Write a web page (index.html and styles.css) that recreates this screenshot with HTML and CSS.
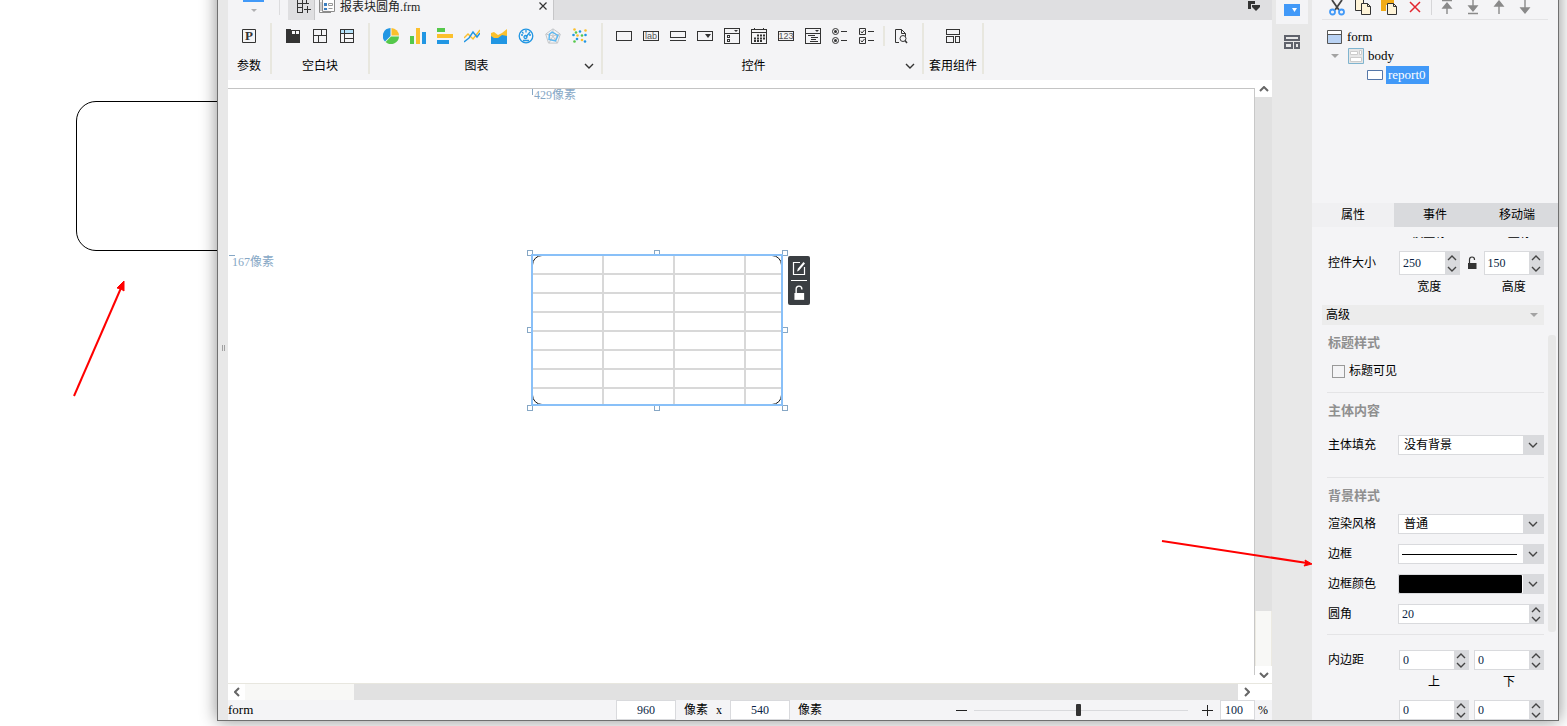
FILE: index.html
```html
<!DOCTYPE html>
<html lang="zh-CN">
<head>
    <meta charset="utf-8">
    <title>报表块圆角.frm</title>
    <link rel="stylesheet" href="styles.css">
</head>
<body>
    <svg class="defs" width="0" height="0" aria-hidden="true">
        <symbol id="chev-down" viewBox="0 0 10 6"><path d="M1 1l4 4 4-4" fill="none" stroke="currentColor" stroke-width="1.4"/></symbol>
        <symbol id="chev-up" viewBox="0 0 10 6"><path d="M1 5l4-4 4 4" fill="none" stroke="currentColor" stroke-width="1.4"/></symbol>
        <symbol id="lock" viewBox="0 0 12 14"><path d="M3.5 7V3.5a2.5 2.5 0 0 1 5 0V4" fill="none" stroke="currentColor" stroke-width="1.2"/><path d="M2 7h8.500v6H2z" fill="currentColor"/></symbol>
    </svg>

    <!-- 预览效果 -->
    <div class="preview"></div>

    <div class="window">
        <div class="grip"><i></i><i></i></div>

        <div class="main">
            <div class="tabbar">
                <div class="quick">
                    <svg width="22" height="14" viewBox="0 0 22 14"><path d="M0 0h21v2H0z" fill="#4199f8"/><path d="M8 9h6l-3 3z" fill="#b0b0b2"/></svg>
                </div>
                <button class="newtab" aria-label="新建">
                    <svg width="16" height="16" viewBox="0 0 16 16"><path d="M2.500 0v13M7.500 0v13M11.500 0v3M2 3.500h12M2 7.500h6M2 12.500h6M12.500 6v7M9 9.500h7" fill="none" stroke="#333" shape-rendering="crispEdges"/></svg>
                </button>
                <div class="tab">
                    <svg width="16" height="16" viewBox="0 0 16 16"><path d="M.5 0v12.500H12M3.500-2h12v13.500h-12z" fill="#fff" stroke="#8c8c8c"/><path d="M1 2h2v9H1z" fill="#ccc"/><path d="M5 3h3v3H5zM5 8h3v2H5z" fill="#3c7fc0"/><path d="M9.500 3.500h4v2h-4zM9.500 8.500h4" fill="none" stroke="#999"/></svg>
                    <span>报表块圆角.frm</span>
                    <button class="close" aria-label="关闭"><svg width="10" height="10" viewBox="0 0 10 10"><path d="M1.500 1.500l7 7M8.500 1.500l-7 7" stroke="#333" stroke-width="1.2"/></svg></button>
                </div>
                <button class="tablist" aria-label="全部标签"><svg width="14" height="12" viewBox="0 0 14 12"><path d="M1 1h7v3H4v5H1zM5 5h8v2l-4 4-4-4z" fill="#333"/></svg></button>
            </div>

            <div class="ribbon">
                <div class="group param">
                    <div class="icons">
                        <button aria-label="参数"><svg width="16" height="16" viewBox="0 0 16 16"><path d="M1.500 1.500h13v13h-13z" fill="none" stroke="#333"/><text x="8" y="12" class="p-mark">P</text></svg></button>
                    </div>
                    <div class="caption"><span>参数</span></div>
                </div>
                <div class="group blank">
                    <div class="icons">
                        <button aria-label="tab块"><svg width="16" height="16" viewBox="0 0 16 16"><path d="M1 1h5v1h9v13H1z" fill="#333"/><path d="M7 3h3v3H7zM11 3h3v3h-3z" fill="#f4f4f6"/></svg></button>
                        <button aria-label="绝对画布块"><svg width="16" height="16" viewBox="0 0 16 16"><path d="M1.500 1.500h13v13h-13zM1.500 7.500h13M9.500 1.500v6M6.500 7.500v7" fill="none" stroke="#333" shape-rendering="crispEdges"/></svg></button>
                        <button aria-label="报表块"><svg width="16" height="16" viewBox="0 0 16 16"><path d="M2 2h12v4H2z" fill="#b5e2fa"/><path d="M1.500 1.500h13v13h-13zM1.500 5.500h13M5.500 1.500v13M5.500 10.500h9" fill="none" stroke="#333" shape-rendering="crispEdges"/></svg></button>
                    </div>
                    <div class="caption"><span>空白块</span></div>
                </div>
                <div class="group charts">
                    <div class="icons">
                        <button aria-label="饼图"><svg width="16" height="16" viewBox="0 0 16 16"><path d="M7.500 8V0A8 8 0 0 0 2 13.500z" fill="#2196e3"/><path d="M8.500 0v7.500H16A8 8 0 0 0 8.500 0z" fill="#fbc02d"/><path d="M8 8.500h8A8 8 0 0 1 2.600 14z" fill="#55c84b"/></svg></button>
                        <button aria-label="柱形图"><svg width="16" height="16" viewBox="0 0 16 16"><path d="M0 8h4v8H0z" fill="#55c84b"/><path d="M6 0h4v16H6z" fill="#fbc02d"/><path d="M12 4h4v12h-4z" fill="#2196e3"/></svg></button>
                        <button aria-label="条形图"><svg width="16" height="16" viewBox="0 0 16 16"><path d="M0 0h8v4H0z" fill="#55c84b"/><path d="M0 6h16v4H0z" fill="#fbc02d"/><path d="M0 12h12v4H0z" fill="#2196e3"/></svg></button>
                        <button aria-label="折线图"><svg width="16" height="16" viewBox="0 0 16 16"><path d="M0 10l4-4 5 5 7-9" fill="none" stroke="#fbc02d" stroke-width="1.400"/><path d="M0 14l5-4 4-6 4 5 3-4" fill="none" stroke="#2196e3" stroke-width="1.400"/></svg></button>
                        <button aria-label="面积图"><svg width="16" height="16" viewBox="0 0 16 16"><path d="M0 5l3-1 4 3 4-2 5-4v9H0z" fill="#fbc02d"/><path d="M0 8l3 2h4l4-3 5 1v8H0z" fill="#2196e3"/></svg></button>
                        <button aria-label="仪表盘"><svg width="16" height="16" viewBox="0 0 16 16" fill="none" stroke="#2196e3" stroke-width="1.300"><circle cx="8" cy="8" r="6.800"/><path d="M8 2v2.500M3 7h2M11 7h2M4 4l1.500 1.500M8 9l4-5M5 12.500h6"/><circle cx="7.500" cy="9" r="1.500"/></svg></button>
                        <button aria-label="雷达图"><svg width="16" height="16" viewBox="0 0 16 16" fill="none"><path d="M8 .8l7.300 5.300-2.800 9h-9l-2.800-9zM8 4l4 3-1.500 5h-5L4 7zM8 1v7M8 8l7-2M8 8l4 7M8 8l-4 7M8 8L1 6" stroke="#c3c6c9"/><path d="M7 4l6 3.500-2.500 5.500L4 11.500 4.500 6z" stroke="#5ab8f2" stroke-width="1.400"/></svg></button>
                        <button aria-label="散点图"><svg width="16" height="16" viewBox="0 0 16 16"><g fill="#fbc02d"><circle cx="2.500" cy="1.500" r="1.300"/><circle cx="13.500" cy="2.500" r="1.300"/><circle cx="5.500" cy="7.500" r="1.300"/><circle cx="10" cy="12" r="1.300"/></g><g fill="#2196e3"><circle cx="8" cy="3.500" r="1.300"/><circle cx="1.500" cy="7" r="1.300"/><circle cx="13.500" cy="7" r="1.300"/><circle cx="5" cy="11" r="1.300"/><circle cx="13" cy="13.500" r="1.300"/></g><g fill="#55c84b"><circle cx="4" cy="4.500" r="1.300"/><circle cx="10" cy="7.500" r="1.300"/><circle cx="2.500" cy="13.500" r="1.300"/></g></svg></button>
                    </div>
                    <div class="caption"><span>图表</span><button class="more" aria-label="更多图表"><svg width="10" height="6"><use href="#chev-down"/></svg></button></div>
                </div>
                <div class="group widgets">
                    <div class="icons">
                        <button aria-label="文本"><svg width="16" height="16" viewBox="0 0 16 16"><path d="M.5 3.500h15v9H.5z" class="ln"/></svg></button>
                        <button aria-label="标签"><svg width="16" height="16" viewBox="0 0 16 16"><path d="M.5 3.500h15v9H.5z" class="ln"/><text x="8" y="11" class="mini">lab</text></svg></button>
                        <button aria-label="按钮"><svg width="16" height="16" viewBox="0 0 16 16"><path d="M.5 3.500h15v6H.5zM0 12.500h16" class="ln"/></svg></button>
                        <button aria-label="下拉框"><svg width="16" height="16" viewBox="0 0 16 16"><path d="M.5 3.500h15v9H.5z" class="ln"/><path d="M8 6h6l-3 4z" fill="#333"/></svg></button>
                        <button aria-label="下拉复选框"><svg width="16" height="16" viewBox="0 0 16 16"><path d="M.5.5h15v15H.5zM.5 5.500h15M3.500 7.500h2v2h-2zM3.500 11.500h2v2h-2z" class="ln"/><path d="M10 2h4l-2 2z" fill="#333"/></svg></button>
                        <button aria-label="日期"><svg width="16" height="16" viewBox="0 0 16 16"><path d="M.5 1.500h15v14H.5zM.5 4.500h15M3.500 0v2M12.500 0v2" class="ln"/><path d="M6 7.500h8M3 10.500h11M3 13h8" stroke="#333" stroke-width="2" stroke-dasharray="2 1"/></svg></button>
                        <button aria-label="数字"><svg width="16" height="16" viewBox="0 0 16 16"><path d="M.5 3.500h15v9H.5z" class="ln"/><text x="8" y="11" class="mini">123</text></svg></button>
                        <button aria-label="下拉树"><svg width="16" height="16" viewBox="0 0 16 16"><path d="M.5.5h15v15H.5zM.5 5.500h15M3 7.500h7M6 9.500h7M6 11.500h5M5 13.500h8" class="ln"/><path d="M10 2h4l-2 2z" fill="#333"/></svg></button>
                        <button aria-label="单选按钮组"><svg width="16" height="16" viewBox="0 0 16 16"><g fill="none" stroke="#333"><circle cx="3.500" cy="3.500" r="3"/><circle cx="3.500" cy="12.500" r="3"/><path d="M9 3.500h6M9 12.500h6"/></g><circle cx="3.500" cy="3.500" r="1.500" fill="#333"/><circle cx="3.500" cy="12.500" r="1.500" fill="#333"/></svg></button>
                        <button aria-label="复选按钮组"><svg width="16" height="16" viewBox="0 0 16 16" fill="none" stroke="#333"><path d="M.5.5h6v6h-6zM.5 9.500h6v6h-6zM9 3.500h6M9 12.500h6M2 3.500l1 1.500 2.500-3M2 12.500L3 14l2.500-3"/></svg></button>
                        <i class="sep"></i>
                        <button aria-label="查询"><svg width="16" height="16" viewBox="0 0 16 16" fill="none" stroke="#333"><path d="M6 14.500H2.500v-13h6l4 4v3M8.500 1.500v4h4" /><circle cx="10" cy="10.500" r="3"/><path d="M12 12.500l2 2.500" stroke-width="1.500"/></svg></button>
                    </div>
                    <div class="caption"><span>控件</span><button class="more" aria-label="更多控件"><svg width="10" height="6"><use href="#chev-down"/></svg></button></div>
                </div>
                <div class="group reuse">
                    <div class="icons">
                        <button aria-label="套用组件"><svg width="16" height="16" viewBox="0 0 16 16"><path d="M1.500 1.500h13v5h-13zM1.500 8.500h7v6h-7zM10.500 8.500h4v6h-4z" class="ln"/></svg></button>
                    </div>
                    <div class="caption"><span>套用组件</span></div>
                </div>
            </div>

            <div class="stage">
                <div class="surface">
                    <span class="mark mark-x">429像素</span>
                    <span class="mark mark-y">167像素</span>
                    <div class="report">
                        <i class="h nw"></i><i class="h n"></i><i class="h ne"></i><i class="h w"></i>
                        <i class="h e"></i><i class="h sw"></i><i class="h s"></i><i class="h se"></i>
                        <div class="cells"></div>
                        <div class="float">
                            <button aria-label="编辑"><svg width="14" height="16" viewBox="0 0 14 16"><path d="M8 2.500H1.500v12h11V7" fill="none" stroke="#fff" stroke-width="1.200"/><path d="M5 11.500l1-3L11.500 2l1.500 1.500-6 7z" fill="#fff"/></svg></button>
                            <button aria-label="锁定"><svg width="14" height="16"><use href="#lock"/></svg></button>
                        </div>
                    </div>
                </div>
                <div class="vscroll">
                    <button aria-label="向上"><svg width="10" height="6" viewBox="0 0 10 6"><path d="M1 5l4-4 4 4" fill="none" stroke="currentColor" stroke-width="2"/></svg></button>
                    <div class="track"></div>
                    <div class="rest"></div>
                    <button aria-label="向下"><svg width="10" height="6" viewBox="0 0 10 6"><path d="M1 1l4 4 4-4" fill="none" stroke="currentColor" stroke-width="2"/></svg></button>
                </div>
            </div>

            <div class="hscroll">
                <button aria-label="向左"><svg width="6" height="10" viewBox="0 0 6 10"><path d="M5 1L1 5l4 4" fill="none" stroke="currentColor" stroke-width="2"/></svg></button>
                <div class="rest"></div>
                <div class="track"></div>
                <button aria-label="向右"><svg width="6" height="10" viewBox="0 0 6 10"><path d="M1 1l4 4-4 4" fill="none" stroke="currentColor" stroke-width="2"/></svg></button>
            </div>

            <div class="status">
                <span class="name">form</span>
                <input type="text" class="dim" value="960" aria-label="宽度">
                <span>像素</span><span>x</span>
                <input type="text" class="dim" value="540" aria-label="高度">
                <span>像素</span>
                <div class="zoom">
                    <button aria-label="缩小"><svg width="11" height="11"><path d="M0 5.500h11" stroke="#222"/></svg></button>
                    <input type="range" min="0" max="200" value="98" aria-label="缩放">
                    <button aria-label="放大"><svg width="11" height="11"><path d="M0 5.500h11M5.500 0v11" stroke="#222"/></svg></button>
                    <input type="text" class="pct" value="100" aria-label="缩放比例">
                    <span>%</span>
                </div>
            </div>
        </div>

        <div class="rail">
            <button class="on" aria-label="控件设置"><svg width="16" height="12" viewBox="0 0 16 12"><path d="M0 0h16v12H0z" fill="#4199f8"/><path d="M8 4h5l-2.500 4z" fill="#fff"/></svg></button>
            <button aria-label="组件库"><svg width="16" height="14" viewBox="0 0 16 14"><path d="M1 1h14v4H1zM1 8h7v5H1zM11 8h4v5h-4z" fill="none" stroke="#5f626b" stroke-width="2"/></svg></button>
        </div>

        <div class="panel">
            <div class="tools">
                <button aria-label="剪切"><svg width="16" height="16" viewBox="0 0 16 16"><path d="M3 0l7 10M13 0L6 10" stroke="#444" stroke-width="1.800"/><g fill="none" stroke="#4199f8" stroke-width="1.800"><circle cx="3.500" cy="12" r="2.500"/><circle cx="12.500" cy="12" r="2.500"/></g></svg></button>
                <button aria-label="复制"><svg width="16" height="16" viewBox="0 0 16 16"><path d="M.5-1h8v11.500h-8z" fill="#fff4d8" stroke="#333"/><path d="M6.500 3.500h6l3 3v8h-9z" fill="#fff4d8" stroke="#333"/><path d="M12.500 3.500v3h3" fill="none" stroke="#333"/></svg></button>
                <button aria-label="粘贴"><svg width="16" height="16" viewBox="0 0 16 16"><path d="M0 0h13v5H5v6H0z" fill="#f2ab16"/><path d="M6.500 3.500h6l3 3v8h-9z" fill="#fff4d8" stroke="#333"/><path d="M12.500 3.500v3h3" fill="none" stroke="#333"/></svg></button>
                <button aria-label="删除"><svg width="16" height="16" viewBox="0 0 16 16"><path d="M3 2l10 10M13 2L3 12" stroke="#e3262e" stroke-width="1.500"/></svg></button>
                <i></i>
                <button aria-label="置顶"><svg width="16" height="16" viewBox="0 0 16 16"><path d="M3 .5h10M8 4v10M4 8l4-5 4 5z" fill="#8a8a8a" stroke="#8a8a8a" stroke-width="1.400"/></svg></button>
                <button aria-label="置底"><svg width="16" height="16" viewBox="0 0 16 16"><path d="M3 13.500h10M8 0v8M4 6l4 5 4-5z" fill="#8a8a8a" stroke="#8a8a8a" stroke-width="1.400"/></svg></button>
                <button aria-label="上移"><svg width="16" height="16" viewBox="0 0 16 16"><path d="M8 4v10M4 6l4-5 4 5z" fill="#8a8a8a" stroke="#8a8a8a" stroke-width="1.400"/></svg></button>
                <button aria-label="下移"><svg width="16" height="16" viewBox="0 0 16 16"><path d="M8 0v10M4 8l4 5 4-5z" fill="#8a8a8a" stroke="#8a8a8a" stroke-width="1.400"/></svg></button>
            </div>

            <ul class="tree">
                <li><svg width="16" height="14" viewBox="0 0 16 14"><path d="M.5.5h14v13H.5z" fill="#fff" stroke="#555"/><path d="M1 5h13v8H1z" fill="#b9d2f3"/><path d="M.5 4.500h14" stroke="#555"/></svg><span>form</span></li>
                <li class="lv1"><svg width="10" height="6" viewBox="0 0 10 6"><path d="M1 1h8L5 5z" fill="#a3a3a3"/></svg><svg width="16" height="16" viewBox="0 0 16 16"><path d="M.5.5h15v15H.5z" fill="#e6e6e6" stroke="#7fb4cf"/><path d="M2.500 3.500h7v3h-7zM11.500 2.500h2v4h-2zM2.500 9.500h11v4h-11z" fill="#fff" stroke="#ccc"/></svg><span>body</span></li>
                <li class="lv2"><svg width="16" height="10" viewBox="0 0 16 10"><path d="M.5.5h15v9H.5z" fill="#fff" stroke="#5577a8"/></svg><span class="sel">report0</span></li>
            </ul>

            <div class="tabs">
                <button class="on">属性</button><button>事件</button><button>移动端</button>
            </div>

            <div class="props">
                <div class="block">
                    <div class="row under scrolled"><i></i><div class="pair locked"><span>横坐标</span><i></i><span>纵坐标</span></div></div>
                    <div class="row tall">
                        <label for="w">控件大小</label>
                        <div class="pair locked">
                            <div class="spin"><input id="w" type="text" value="250"><div><button aria-label="增加"><svg width="10" height="6"><use href="#chev-up"/></svg></button><button aria-label="减少"><svg width="10" height="6"><use href="#chev-down"/></svg></button></div></div>
                            <button class="lock" aria-label="锁定比例"><svg width="12" height="14"><use href="#lock"/></svg></button>
                            <div class="spin"><input type="text" value="150" aria-label="高度"><div><button aria-label="增加"><svg width="10" height="6"><use href="#chev-up"/></svg></button><button aria-label="减少"><svg width="10" height="6"><use href="#chev-down"/></svg></button></div></div>
                        </div>
                    </div>
                    <div class="row under"><i></i><div class="pair locked"><span>宽度</span><i></i><span>高度</span></div></div>
                </div>

                <button class="fold"><span>高级</span><svg width="10" height="6" viewBox="0 0 10 6"><path d="M1 1h8L5 5z" fill="#a3a3a3"/></svg></button>

                <div class="block">
                    <h3>标题样式</h3>
                    <label class="check"><input type="checkbox">标题可见</label>
                </div>
                <div class="block fill">
                    <h3>主体内容</h3>
                    <div class="row">
                        <label for="fill">主体填充</label>
                        <div class="select"><select id="fill"><option>没有背景</option></select><b><svg width="10" height="6"><use href="#chev-down"/></svg></b></div>
                    </div>
                </div>
                <div class="block style">
                    <h3>背景样式</h3>
                    <div class="row">
                        <label for="render">渲染风格</label>
                        <div class="select"><select id="render"><option>普通</option></select><b><svg width="10" height="6"><use href="#chev-down"/></svg></b></div>
                    </div>
                    <div class="row">
                        <label for="line">边框</label>
                        <div class="select line"><select id="line"><option></option></select><b><svg width="10" height="6"><use href="#chev-down"/></svg></b></div>
                    </div>
                    <div class="row">
                        <label for="color">边框颜色</label>
                        <div class="select"><button id="color" class="swatch"></button><b><svg width="10" height="6"><use href="#chev-down"/></svg></b></div>
                    </div>
                    <div class="row">
                        <label for="radius">圆角</label>
                        <div class="spin"><input id="radius" type="text" value="20"><div><button aria-label="增加"><svg width="10" height="6"><use href="#chev-up"/></svg></button><button aria-label="减少"><svg width="10" height="6"><use href="#chev-down"/></svg></button></div></div>
                    </div>
                </div>
                <div class="block pad">
                    <div class="row">
                        <label for="pt">内边距</label>
                        <div class="pair">
                            <div class="spin"><input id="pt" type="text" value="0"><div><button aria-label="增加"><svg width="10" height="6"><use href="#chev-up"/></svg></button><button aria-label="减少"><svg width="10" height="6"><use href="#chev-down"/></svg></button></div></div>
                            <div class="spin"><input type="text" value="0" aria-label="下"><div><button aria-label="增加"><svg width="10" height="6"><use href="#chev-up"/></svg></button><button aria-label="减少"><svg width="10" height="6"><use href="#chev-down"/></svg></button></div></div>
                        </div>
                    </div>
                    <div class="row under"><i></i><div class="pair"><span>上</span><span>下</span></div></div>
                    <div class="row">
                        <i></i>
                        <div class="pair">
                            <div class="spin"><input type="text" value="0" aria-label="左"><div><button aria-label="增加"><svg width="10" height="6"><use href="#chev-up"/></svg></button><button aria-label="减少"><svg width="10" height="6"><use href="#chev-down"/></svg></button></div></div>
                            <div class="spin"><input type="text" value="0" aria-label="右"><div><button aria-label="增加"><svg width="10" height="6"><use href="#chev-up"/></svg></button><button aria-label="减少"><svg width="10" height="6"><use href="#chev-down"/></svg></button></div></div>
                        </div>
                    </div>
                </div>
                <div class="thumb"></div>
            </div>
        </div>
    </div>

    <!-- 红色箭头标注 -->
    <svg class="arrow arrow-a" width="60" height="120" viewBox="0 0 60 120"><path d="M4 116L51 8" stroke="#f00" stroke-width="2"/><path d="M54 1v10l-3-2-4-1z" fill="#f00" stroke="#f00"/></svg>
    <svg class="arrow arrow-b" width="156" height="36" viewBox="0 0 156 36"><path d="M2 5l145 22" stroke="#f00" stroke-width="2"/><path d="M152 28l-7-4 1 3-2 3z" fill="#f00" stroke="#f00"/></svg>
</body>
</html>
```

FILE: styles.css
```css
* {margin: 0;padding: 0;box-sizing: border-box;}
html {height: 100%;}
body {display: flex;position: relative;height: 100vh;padding: 0 8px 5px 217px;overflow: hidden;background: #fff;color: #000;font: 12px/16px "Liberation Serif","Noto Sans CJK SC",serif;}
button, input, select {font: inherit;color: inherit;border: 0;background: none;border-radius: 0;outline: 0;}
button {display: flex;align-items: center;justify-content: center;cursor: pointer;}
svg {display: block;flex: none;}
ul {list-style: none;}
.defs {position: absolute;}

.preview {position: absolute;left: 76px;top: 101px;width: 250px;height: 150px;border: 1px solid #000;border-radius: 20px;}
.arrow {position: absolute;}
.arrow-a {left: 70px;top: 280px;}
.arrow-b {right: 251px;top: 536px;}

/*设计器窗口*/
.window {position: relative;display: flex;flex: 1;min-width: 0;margin-top: -30px;padding-top: 30px;border: 1px solid #707070;border-top: 0;background: #f4f4f6;box-shadow: 0 0 16px rgba(0,0,0,0.45);}
.grip {display: flex;align-items: center;justify-content: center;gap: 1px;width: 10px;margin-top: -30px;background: #e8e8e8;}
.grip i {width: 1px;height: 6px;margin-top: 6px;background: #a0a0a0;}
.main {display: flex;flex: 1;flex-direction: column;min-width: 0;}

.tabbar {display: flex;height: 20px;overflow: hidden;background: #dfdfe1;}
.quick {width: 60px;padding-left: 15px;background: linear-gradient(#dcdcde,#dcdcde) 51px 0/1px 15px no-repeat #f4f4f6;}
.newtab {width: 27px;align-items: flex-start;padding-left: 4px;border-right: 1px solid #c6c6c8;}
.tab {display: flex;width: 239px;padding: 0 5px 0 4px;border-right: 1px solid #c6c6c8;background: #f4f4f6;}
.tab span {flex: 1;margin-left: 5px;line-height: 14px;color: #222;}
.close {height: 12px;}
.tablist {margin-left: auto;padding: 0 11px 8px;}

/*工具栏*/
.ribbon {display: flex;height: 60px;padding-top: 3px;background: #f4f4f6;}
.group {display: flex;flex-direction: column;justify-content: space-between;height: 51px;padding-top: 5px;border-right: 2px solid #e8e7df;}
.icons {display: flex;gap: 11px;height: 16px;padding-left: 13px;}
.caption {display: flex;height: 16px;text-align: center;}
.caption span {flex: 1;white-space: nowrap;}
.more {width: 12px;margin-right: 6px;color: #333;}
.param {width: 44px;}
.blank {width: 98px;}
.charts {width: 233px;}
.widgets {width: 321px;}
.reuse {width: 60px;}
.reuse .icons {justify-content: center;padding: 0;}
.sep {width: 2px;height: 20px;margin: -2px -3px;background: #e8e7df;}
.ln {fill: none;stroke: #333;shape-rendering: crispEdges;}
.p-mark {font: bold 13px "Liberation Serif",serif;text-anchor: middle;fill: #333;}
.mini {font: 9px "Liberation Sans",sans-serif;text-anchor: middle;fill: #555;}

/*画布*/
.stage {display: flex;flex: 1;min-height: 0;background: #fff;}
.surface {position: relative;flex: 1;margin: 8px 0;border-top: 1px solid #c4c4c4;border-right: 1px solid #c8c8c8;overflow: hidden;}
.mark {position: absolute;color: #86a7c5;}
.mark-x {left: 304px;top: 0;padding-left: 2px;line-height: 12px;background: linear-gradient(#86a7c5,#86a7c5) 0 0/1px 6px no-repeat;}
.mark-y {left: 1px;top: 166px;padding: 0 3px;line-height: 14px;background: linear-gradient(#86a7c5,#86a7c5) 0 0/6px 1px no-repeat;}
.report {position: absolute;left: 303px;top: 165px;width: 252px;height: 152px;}
.cells {position: absolute;inset: 1px;border: 1px solid #111;border-radius: 10px;background: repeating-linear-gradient(90deg,transparent 0 69px,#d8d8d8 69px 71px),repeating-linear-gradient(transparent 0 17px,#d8d8d8 17px 19px),#fff;}
.report::after {content: "";position: absolute;inset: 0;border: 2px solid #89c0f8;}
.h {position: absolute;width: 6px;height: 6px;border: 1px solid #86a7c5;background: #fff;}
.nw, .n, .ne {top: -4px;}
.sw, .s, .se {bottom: -5px;}
.nw, .w, .sw {left: -4px;}
.ne, .e, .se {right: -5px;}
.n, .s {left: 123px;}
.w, .e {top: 73px;}
.float {position: absolute;left: 257px;top: 2px;width: 22px;padding: 0 3px;border-radius: 2px;background: #3a3e42;color: #fff;}
.float button {width: 16px;height: 24px;}
.float button + button {height: 25px;border-top: 1px solid #fff;}

.vscroll {display: flex;flex-direction: column;width: 17px;color: #666;}
.vscroll button {height: 17px;}
.vscroll .track {flex: 514;background: #e1e1e1;}
.vscroll .rest {flex: 55;border: 1px solid #eceae2;border-width: 0 1px;background: #f8f8f6;}
.hscroll {display: flex;height: 17px;padding-right: 17px;border-top: 1px solid #e8e7df;background: #fff;color: #666;}
.hscroll button {width: 17px;}
.hscroll .rest {flex: 109;background: #f8f8f6;}
.hscroll .track {flex: 884;background: #e1e1e1;}

.status {display: flex;align-items: center;gap: 8px;height: 20px;}
.name, .tree span {font-size: 13px;}
.name {width: 380px;}
.dim, .pct {height: 20px;border: 1px solid #d9dadd;background: #fff;color: #0b1f44;text-align: center;}
.dim {width: 60px;}
.zoom {display: flex;align-items: center;gap: 7px;margin-left: auto;padding-right: 4px;}
.zoom button {width: 11px;}
.zoom input[type=range] {width: 214px;height: 12px;margin-right: 7px;appearance: none;background: linear-gradient(#d9dadd,#d9dadd) 0 6px/100% 1px no-repeat;}
.zoom input[type=range]::-webkit-slider-thumb {appearance: none;width: 5px;height: 12px;border-radius: 1px;background: #333;}
.pct {width: 35px;padding-left: 4px;text-align: left;}
.zoom span {margin-left: -4px;}

/*右侧图标栏*/
.rail {width: 40px;margin-top: -30px;padding: 30px 4px 0;background: #e8e8e8;}
.rail button {width: 32px;height: 36px;}
.rail .on {height: 24px;padding-bottom: 4px;background: #f4f4f6;}

/*属性面板*/
.panel {display: flex;flex-direction: column;width: 246px;}
.tools {display: flex;gap: 10px;height: 20px;margin: 0 10px;padding-left: 7px;border-bottom: 1px solid #e4e4e6;}
.tools button {height: 16px;}
.tools i {width: 1px;height: 15px;margin: 0 -3px 0 -2px;background: #d6d6d8;}
.tree {height: 183px;padding: 7px 0 0 15px;}
.tree li {display: flex;align-items: center;height: 19px;gap: 4px;}
.tree .lv1 {padding-left: 3px;}
.tree .lv1 svg + svg {margin-left: 4px;}
.tree .lv2 {gap: 3px;padding-left: 40px;}
.tree .sel {padding: 1px 3px 1px 2px;background: #4199f8;color: #fff;}
.tabs {display: grid;grid-template-columns: repeat(3,1fr);height: 24px;background: #d9dadd;}
.tabs .on {background: #f0f0f2;}

.props {position: relative;flex: 1;min-height: 0;margin-top: 10px;overflow: hidden;}
.block {margin: 0 14px 0 15px;}
.block + .block {padding-top: 10px;border-top: 1px solid #e4e4e6;}
.block h3 {padding-left: 1px;font-size: 13px;line-height: 16px;color: #8f8f8f;}
.row {display: grid;grid-template-columns: 71px 1fr;height: 20px;align-items: center;margin-top: 10px;}
.row label {padding-left: 1px;}
.tall {height: 24px;}
.under {height: 16px;margin-top: 4px;text-align: center;}
.scrolled {margin-top: -12px;}
.pair {display: grid;grid-template-columns: 1fr 1fr;gap: 5px;height: 100%;padding-left: 1px;}
.locked {grid-template-columns: 1fr 24px 1fr;gap: 0;}
.lock {color: #333;}
.spin, .select {display: flex;height: 100%;min-width: 0;border: 1px solid #d9dadd;background: #fff;}
.spin input {flex: 1;width: 0;padding-left: 3px;color: #0b1f44;}
.spin > div {display: flex;flex-direction: column;width: 14px;background: #d9dadd;color: #444;}
.spin button {flex: 1;width: 14px;}
.select select {flex: 1;width: 0;padding-left: 5px;appearance: none;}
.select b {display: flex;align-items: center;justify-content: center;width: 20px;background: #d9dadd;color: #444;}
.line select {margin: 0 6px 0 3px;background: linear-gradient(#000,#000) 0 9px/100% 1px no-repeat;}
.swatch {flex: 1;margin-right: 1px;border-radius: 1px;background: #000;}
.fold {width: calc(100% - 24px);height: 20px;margin: 10px 14px 10px 10px;padding: 0 5px 0 4px;justify-content: space-between;background: #ececec;}
.check {display: flex;align-items: center;gap: 4px;margin: 12px 0 13px 5px;}
.check input {width: 13px;height: 13px;appearance: none;border: 1px solid #999;}
.fill {padding-bottom: 22px;}
.fill .row {margin-top: 16px;}
.style {padding-bottom: 10px;}
.pad.block {padding-top: 5px;}
.thumb {position: absolute;right: 2px;top: 98px;width: 8px;height: 297px;border-radius: 3px;background: #e8e8e8;}
```
